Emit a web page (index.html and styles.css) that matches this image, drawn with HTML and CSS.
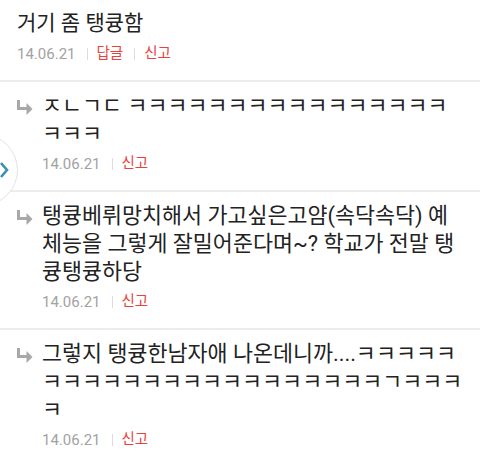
FILE: index.html
```html
<!DOCTYPE html>
<html lang="ko">
  <head>
    <meta charset="UTF-8" />
    <meta name="viewport" content="width=device-width, initial-scale=1.0" />
    <title>댓글</title>
    <link rel="stylesheet" href="styles.css">
  </head>
  <body>
    <div class="comment">
      <p class="title">거기 좀 탱큥함</p>
      <div class="meta">
        <span class="date">14.06.21</span>
        <span class="bar"></span>
        <a class="action">답글</a>
        <span class="bar"></span>
        <a class="action">신고</a>
      </div>
    </div>

    <div class="comment reply">
      <svg class="reply-icon" width="17" height="17" viewBox="0 0 17 17">
        <path d="M1.5 2 V10.5 H11" fill="none" stroke="#a8a8a8" stroke-width="3" />
        <path d="M9.5 5 L15.5 11 L9.5 17 Z" fill="#a8a8a8" />
      </svg>
      <div class="body">
        <p class="text">ㅈㄴㄱㄷ ㅋㅋㅋㅋㅋㅋㅋㅋㅋㅋㅋㅋㅋㅋㅋㅋㅋㅋㅋ</p>
        <div class="meta">
          <span class="date">14.06.21</span>
          <span class="bar"></span>
          <a class="action">신고</a>
        </div>
      </div>
    </div>

    <div class="comment reply">
      <svg class="reply-icon" width="17" height="17" viewBox="0 0 17 17">
        <path d="M1.5 2 V10.5 H11" fill="none" stroke="#a8a8a8" stroke-width="3" />
        <path d="M9.5 5 L15.5 11 L9.5 17 Z" fill="#a8a8a8" />
      </svg>
      <div class="body">
        <p class="text">탱큥베뤼망치해서 가고싶은고얌(속닥속닥) 예체능을 그렇게 잘밀어준다며~? 학교가 전말 탱큥탱큥하당</p>
        <div class="meta">
          <span class="date">14.06.21</span>
          <span class="bar"></span>
          <a class="action">신고</a>
        </div>
      </div>
    </div>

    <div class="comment reply">
      <svg class="reply-icon" width="17" height="17" viewBox="0 0 17 17">
        <path d="M1.5 2 V10.5 H11" fill="none" stroke="#a8a8a8" stroke-width="3" />
        <path d="M9.5 5 L15.5 11 L9.5 17 Z" fill="#a8a8a8" />
      </svg>
      <div class="body">
        <p class="text">그렇지 탱큥한남자애 나온데니까....ㅋㅋㅋㅋㅋㅋㅋㅋㅋㅋㅋㅋㅋㅋㅋㅋㅋㅋㅋㅋㅋㅋㄱㅋㅋㅋㅋ</p>
        <div class="meta">
          <span class="date">14.06.21</span>
          <span class="bar"></span>
          <a class="action">신고</a>
        </div>
      </div>
    </div>

    <div class="side-handle">
      <svg width="10" height="18" viewBox="0 0 10 18">
        <path d="M2 2 L8 9 L2 16" fill="none" stroke="#3d8eb0" stroke-width="2.6" />
      </svg>
    </div>
  </body>
</html>
```

FILE: styles.css
```css
body {
  margin: 0;
  background-color: #fff;
  color: #222;
  font-family: Roboto, "Noto Sans CJK KR", sans-serif;
  position: relative;
  overflow: hidden;
}

.comment {
  padding: 9px 15px 16px 17px;
  border-bottom: 2px solid #ececec;
}

.title {
  margin: 0;
  font-size: 21px;
  line-height: 28px;
}

.reply {
  display: flex;
  align-items: flex-start;
  padding-top: 10px;
  padding-bottom: 16px;
}

.reply-icon {
  flex: none;
  margin-top: 6px;
  margin-right: 8px;
}

.body {
  flex: 1;
}

.text {
  margin: 0;
  font-size: 21.75px;
  line-height: 28px;
}

.meta {
  display: flex;
  align-items: center;
  margin-top: 7px;
  font-size: 14.5px;
  line-height: 20px;
}

.reply .meta {
  margin-top: 6px;
}

.date {
  font-size: 15px;
  color: #a2a2a2;
}

.bar {
  width: 1px;
  height: 12px;
  margin: 0 9px 0 11px;
  background-color: #dcdcdc;
}

.action {
  color: #e8423c;
}

.side-handle {
  position: absolute;
  left: -54px;
  top: 134px;
  width: 72px;
  height: 72px;
  border: 1px solid #e3e3e3;
  border-radius: 50%;
  background-color: #fff;
  display: flex;
  align-items: center;
  justify-content: flex-end;
  padding-right: 8px;
  box-sizing: border-box;
}
```
